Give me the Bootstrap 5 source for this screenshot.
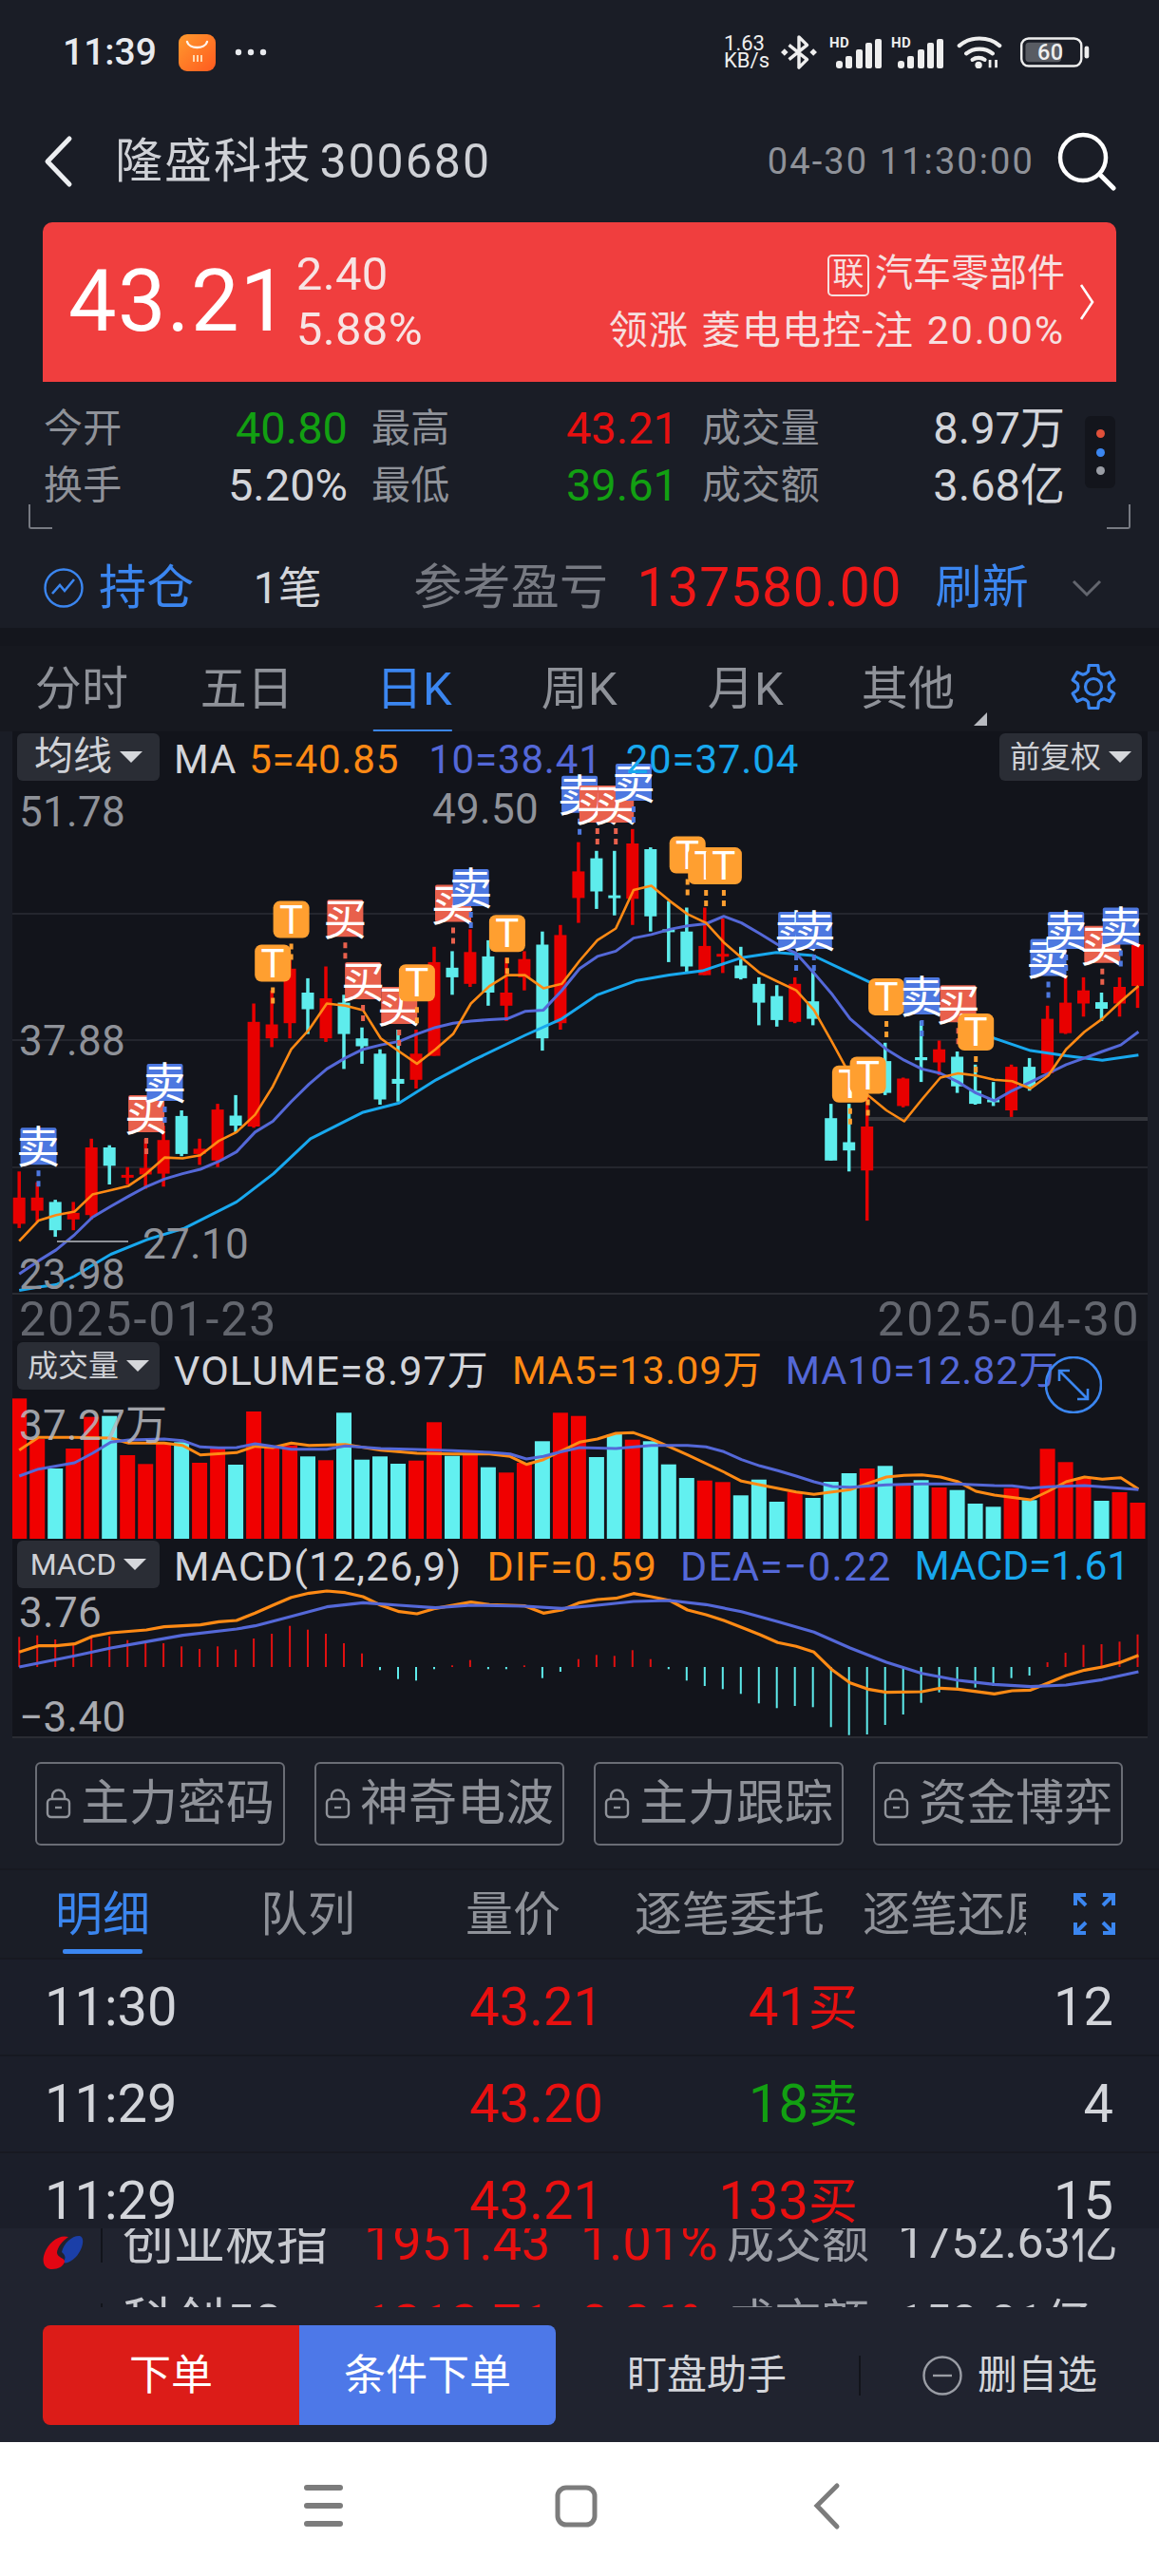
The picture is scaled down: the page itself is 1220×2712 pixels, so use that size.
<!DOCTYPE html>
<html lang="zh-CN">
<head>
<meta charset="utf-8">
<title>隆盛科技 300680</title>
<link href="https://cdn.jsdelivr.net/npm/bootstrap@5.3.0/dist/css/bootstrap.min.css" rel="stylesheet">
<style>
html,body{margin:0;background:#1a1d26}
body{width:1220px;height:2712px;overflow:hidden;font-family:Roboto,"Noto Sans CJK SC",sans-serif;color:#d3d5da;letter-spacing:.02em}
.c-red{color:#e81010}.c-green{color:#12a012}.c-blue{color:#3b86f0}.c-gray{color:#8f9299}.c-org{color:#ff8a14}.c-idx{color:#5468d8}.c-sky{color:#18a8ee}
.st-bar{height:110px;padding:0 72px 0 66px}
.st-time{font-size:39px;font-weight:500;color:#e8eaee;letter-spacing:0;line-height:1}
.st-app{width:39px;height:39px;border-radius:9px;background:linear-gradient(135deg,#ff9a2e,#ff5a1f);margin-left:23px;margin-right:20px}
.st-speed{font-size:22px;line-height:18px;color:#eee;letter-spacing:0;text-align:left;margin-right:12px}
.st-sig{margin-left:13px}.st-sig2{margin-left:10px}.st-wifi{margin-left:14px}.st-bat{margin-left:18px}
.hdr{height:124px;padding:0 45px 4px 45px}
.hdr-title{font-size:50px;margin-left:44px;letter-spacing:.04em;word-spacing:-7px;color:#cfd1d6}
.hdr-time{font-size:38px;color:#8f9299;letter-spacing:.055em;margin-right:24px}
.quote{height:168px;margin:0 45px;background:#f03e3e;border-radius:10px 10px 0 0;color:#fff;padding:0 22px 0 27px}
.q-big{font-size:90px;letter-spacing:.015em;line-height:1}
.q-small{font-size:49px;line-height:58px;margin-left:7px;color:#f7e4e4}
.q-right{font-size:41px;line-height:60px;text-align:right;color:#f6e0e0;margin-right:14px;word-spacing:2px;letter-spacing:.03em}
.q-line1{font-size:40px;letter-spacing:0}
.q-pct{letter-spacing:.05em}
.q-tag{display:inline-block;width:44px;height:44px;border:2px solid #f6e0e0;border-radius:5px;font-size:33px;line-height:38px;text-align:center;letter-spacing:0;margin-right:6px;vertical-align:1px}
.stats{padding:19px 0 0 46px}
.stat-grid{display:grid;grid-template-columns:320px 323px 382px;column-gap:25px;grid-auto-rows:60px;font-size:41px;line-height:60px}
.stat-cell{display:flex;justify-content:space-between;white-space:nowrap}
.stat-lab{color:#8f9299}.stat-val{font-size:47px;letter-spacing:0}
.stat-dots{width:32px;height:76px;background:#13151c;border-radius:6px;margin-left:21px;margin-top:17px;padding:14px 0;display:flex;flex-direction:column;align-items:center;justify-content:space-between}
.dot-i{width:9px;height:9px;border-radius:50%}
.corners{padding:0 30px;margin-top:-10px;height:26px}
.corner{width:25px;height:26px;border-bottom:2px solid #777a82;border-left:2px solid #777a82;border-radius:0 0 0 3px}
.corner.r{border-left:0;border-right:2px solid #777a82;border-radius:0 0 3px 0}
.hold{height:104px;padding:20px 0 0 46px;white-space:nowrap}
.hold-a{font-size:50px;color:#3b86f0;margin-left:16px}
.hold-b{font-size:46px;margin-left:62px;color:#d3d5da}
.hold-c{font-size:51px;color:#777a82;margin-left:96px}
.hold-d{font-size:57px;color:#f01818;margin-left:30px;letter-spacing:.015em}
.hold-e{font-size:49px;color:#3b86f0;margin-left:35px}
.hold-f{margin-left:45px}
.strip{height:19px;background:#14161d}
.ktabs{height:90px;background:#16181f;position:relative}
.ktab{position:absolute;top:18px;font-size:49px;line-height:56px;color:#8f9299;transform:translateX(-50%);white-space:nowrap}
.ktab.on{color:#3b86f0}
.ktab.on::after{content:"";position:absolute;left:-3px;right:0;top:70px;height:4px;background:#3b86f0}
.cpanel{margin:0 12px 0 13px;position:relative;background:#12141b}
.cpanel svg{display:block}
.chip{position:absolute;top:2px;left:5px;height:50px;background:#2a2d35;border-radius:6px;display:flex;align-items:center;justify-content:center;color:#cfd1d6;font-size:32px;width:150px;gap:8px;letter-spacing:0}
.chip::after{content:"";border:12px solid transparent;border-top:12px solid #d5d7db;border-bottom:0}
.chip.big{font-size:41px}
.chip.rt{left:auto;right:6px}
.legend{position:absolute;top:0;left:170px;display:flex;font-size:43px;line-height:56px;white-space:nowrap;letter-spacing:.025em}
.leg-ma{top:2px;font-size:42px;letter-spacing:.02em}
.leg-sm{font-size:41.500px;letter-spacing:.02em}
.leg-tight{font-size:42.500px;letter-spacing:0}
.locks{padding:25px 37px 0;gap:31px}
.lockb{width:263px;height:88px;border:2px solid #6a6d75;border-radius:6px;font-size:51px;color:#8f9299;padding:0;display:flex;align-items:center;justify-content:center;gap:10px;letter-spacing:0}
.sep-line{height:26px;border-bottom:2px solid #171921}
.dtabs{height:92px;position:relative}
.dt-wrap{width:1080px;overflow:hidden;display:flex;height:92px}
.dtab{flex:0 0 auto;font-size:50px;line-height:94px;text-align:center;color:#8f9299;letter-spacing:0;white-space:nowrap}
.dtab.on{color:#3b86f0;position:relative}
.dtab.on::after{content:"";position:absolute;left:66px;width:84px;bottom:4px;height:5px;background:#3b86f0;border-radius:2px}
.w216{width:216px}.w240{width:240px}.w-last{margin-left:20px;width:200px;text-align:left}
.d-exp{position:absolute;left:1130px;top:24px}
.trow{display:grid;grid-template-columns:253px 335px 268px 269px;padding-left:47px;height:102px;line-height:100px;font-size:56px;background:#1b1e29;border-top:2px solid #171921;letter-spacing:0;overflow:hidden}
.trow.last{height:81px}
.trow .e{text-align:right}
.trow .cj{font-size:52px}
.idx{height:83px;background:#20232f;overflow:hidden;padding:0 0 0 45px}
.idx-line{display:flex;align-items:center;height:85px;font-size:54px;white-space:nowrap;letter-spacing:0;color:#c8cad0;position:relative}
.idx-line>*{flex:none}
.idx-line.one{margin-top:-28px}
.idx-logo{position:relative;top:10px}
.idx-sep{width:2px;height:42px;background:#12141b;margin:0 21px 0 18px}
.idx-n{width:254px}
.idx-p{width:228px}
.idx-q{width:154px}
.idx-r{width:180px;font-size:50px;color:#9a9da5}
.idx-v{font-size:50px}
.bot{height:142px;background:#20232f;padding:19px 0 18px 45px}
.btn-red,.btn-blu{width:270px;height:105px;color:#fff;font-size:44px;border:0;border-radius:8px 0 0 8px;background:#dc1c18;letter-spacing:0}
.btn-blu{background:#4d78e8;border-radius:0 8px 8px 0}
.bot-a{font-size:42px;color:#d3d5da;margin-left:75px;letter-spacing:0}
.bot-s{width:2px;height:42px;background:#12141b;margin:0 65px 0 76px}
.bot-b{font-size:42px;color:#d3d5da;margin-left:16px;letter-spacing:0}
.nav-w{height:142px;background:#fff;position:relative}
.nav-w svg{display:block}
.exp-ic{position:absolute;left:1087px;top:16px}
</style>
</head>
<body>

<div class="st-bar d-flex align-items-center">
  <span class="st-time">11:39</span>
  <div class="st-app">
    <svg width="39" height="39" viewBox="0 0 39 39"><path d="M9 8c2 8 19 8 21 0" fill="none" stroke="#fff" stroke-width="2.4" stroke-linecap="round" opacity=".9"/><rect x="15" y="22" width="2" height="7" fill="#ffd9b0"/><rect x="19" y="22" width="2" height="7" fill="#ffd9b0"/><rect x="23" y="22" width="2" height="7" fill="#ffd9b0"/></svg>
  </div>
  <svg width="34" height="10" viewBox="0 0 34 10"><circle cx="4" cy="5" r="3.2" fill="#e8eaee"/><circle cx="17" cy="5" r="3.2" fill="#e8eaee"/><circle cx="30" cy="5" r="3.2" fill="#e8eaee"/></svg>
  <div class="ms-auto d-flex align-items-center">
    <div class="st-speed">1.63<br>KB/s</div>
    <svg width="38" height="42" viewBox="0 0 40 44"><path d="M9 14l20 16-9 9V5l9 9-20 16" fill="none" stroke="#eee" stroke-width="3.6" stroke-linejoin="round"/><path d="M4 18l4 4-4 4-4-4zM36 18l4 4-4 4-4-4z" fill="#eee"/></svg>
    <svg class="st-sig" width="55" height="36" viewBox="0 0 55 36"><text x="0" y="13" font-size="15" font-weight="700" fill="#eee" font-family="Roboto">HD</text><rect x="7" y="27" width="7" height="8" rx="3" fill="#eee"/><rect x="17" y="22" width="7" height="13" rx="2" fill="#eee"/><rect x="28" y="15" width="7" height="20" rx="2" fill="#eee"/><rect x="38" y="8" width="7" height="27" rx="2" fill="#eee"/><rect x="48" y="4" width="7" height="31" rx="2" fill="#eee"/></svg>
    <svg class="st-sig2" width="55" height="36" viewBox="0 0 55 36"><text x="0" y="13" font-size="15" font-weight="700" fill="#eee" font-family="Roboto">HD</text><rect x="7" y="27" width="7" height="8" rx="3" fill="#eee"/><rect x="17" y="22" width="7" height="13" rx="2" fill="#eee"/><rect x="28" y="15" width="7" height="20" rx="2" fill="#eee"/><rect x="38" y="8" width="7" height="27" rx="2" fill="#eee"/><rect x="48" y="4" width="7" height="31" rx="2" fill="#eee"/></svg>
    <svg class="st-wifi" width="48" height="37" viewBox="0 0 52 38"><g fill="none" stroke="#eee" stroke-width="4.5" stroke-linecap="round"><path d="M3 11C15 0 37 0 49 11"/><path d="M11 20c8-7 22-7 30 0"/><path d="M18 27c4-3 10-3 14 0"/></g><circle cx="25" cy="33" r="4" fill="#eee"/><path d="M38 36v-9M45 36v-9" stroke="#eee" stroke-width="3"/></svg>
    <svg class="st-bat" width="75" height="32" viewBox="0 0 78 34"><rect x="1.5" y="1.500" width="67" height="31" rx="8" fill="none" stroke="#eee" stroke-width="2.6"/><rect x="6" y="6" width="40" height="22" rx="4" fill="#595c63"/><rect x="72" y="10" width="5" height="14" rx="2.5" fill="#eee"/><text x="34" y="26" font-size="25" font-weight="500" fill="#eee" text-anchor="middle" font-family="Roboto">60</text></svg>
  </div>
</div>

<div class="hdr d-flex align-items-center">
  <svg width="32" height="56" viewBox="0 0 32 56"><path d="M28 4L5 28l23 24" fill="none" stroke="#eceef1" stroke-width="5" stroke-linecap="round" stroke-linejoin="round"/></svg>
  <span class="hdr-title">隆盛科技 300680</span>
  <span class="hdr-time ms-auto">04-30 11:30:00</span>
  <svg width="62" height="62" viewBox="0 0 62 62"><circle cx="27" cy="27" r="24" fill="none" stroke="#fff" stroke-width="4.5"/><path d="M45 45l14 14" stroke="#fff" stroke-width="5" stroke-linecap="round"/></svg>
</div>

<div class="quote d-flex align-items-center">
  <div class="q-big">43.21</div>
  <div class="q-small"><div>2.40</div><div>5.88%</div></div>
  <div class="ms-auto q-right">
    <div class="q-line1"><span class="q-tag">联</span>汽车零部件</div>
    <div>领涨 菱电电控-注 <span class="q-pct">20.00%</span></div>
  </div>
  <svg width="18" height="42" viewBox="0 0 18 42"><path d="M3 3l12 18L3 39" fill="none" stroke="#fff" stroke-width="2.6"/></svg>
</div>

<div class="stats d-flex">
  <div class="stat-grid">
    <div class="stat-cell"><span class="stat-lab">今开</span><span class="stat-val c-green">40.80</span></div>
    <div class="stat-cell"><span class="stat-lab">最高</span><span class="stat-val c-red">43.21</span></div>
    <div class="stat-cell"><span class="stat-lab">成交量</span><span class="stat-val">8.97万</span></div>
    <div class="stat-cell"><span class="stat-lab">换手</span><span class="stat-val">5.20%</span></div>
    <div class="stat-cell"><span class="stat-lab">最低</span><span class="stat-val c-green">39.61</span></div>
    <div class="stat-cell"><span class="stat-lab">成交额</span><span class="stat-val">3.68亿</span></div>
  </div>
  <div class="stat-dots"><i class="dot-i" style="background:#e0503a"></i><i class="dot-i" style="background:#3b86f0"></i><i class="dot-i" style="background:#9a9da5"></i></div>
</div>
<div class="corners d-flex justify-content-between"><div class="corner"></div><div class="corner r"></div></div>

<div class="hold d-flex align-items-center">
  <svg width="42" height="42" viewBox="0 0 42 42"><circle cx="21" cy="21" r="19.5" fill="none" stroke="#3b86f0" stroke-width="2.4"/><path d="M9 27l8-9 5 6 10-12" fill="none" stroke="#3b86f0" stroke-width="2.6"/></svg>
  <span class="hold-a">持仓</span><span class="hold-b">1笔</span><span class="hold-c">参考盈亏</span><span class="hold-d">137580.00</span><span class="hold-e">刷新</span>
  <svg class="hold-f" width="32" height="20" viewBox="0 0 32 20"><path d="M2 3l14 14L30 3" fill="none" stroke="#63666e" stroke-width="3"/></svg>
</div>
<div class="strip"></div>

<div class="ktabs">
  <span class="ktab" style="left:86px">分时</span>
  <span class="ktab" style="left:260px">五日</span>
  <span class="ktab on" style="left:436px">日K</span>
  <span class="ktab" style="left:610px">周K</span>
  <span class="ktab" style="left:785px">月K</span>
  <span class="ktab" style="left:956px">其他</span>
  <svg class="position-absolute" style="left:1025px;top:70px" width="14" height="14" viewBox="0 0 14 14"><path d="M14 0v14H0z" fill="#b8bac0"/></svg>
  <svg class="position-absolute" style="left:1126px;top:18px" width="50" height="50" viewBox="-25 -25 50 50"><path id="gearp" fill="none" stroke="#3b86f0" stroke-width="3.2" stroke-linejoin="round"/><circle r="8.5" fill="none" stroke="#3b86f0" stroke-width="3.2"/></svg>
</div>

<div class="cpanel" id="p1">
  <svg id="s1" width="1195" height="642" viewBox="13 770 1195 642"></svg>
  <div class="chip big">均线</div>
  <div class="chip rt">前复权</div>
  <div class="legend leg-ma"><span>MA</span><span class="c-org" style="margin-left:13px">5=40.85</span><span class="c-idx" style="margin-left:31px">10=38.41</span><span class="c-sky" style="margin-left:25px">20=37.04</span></div>
</div>
<div class="cpanel" id="p2">
  <svg id="s2" width="1195" height="208" viewBox="13 1412 1195 208"></svg>
  <div class="chip" style="top:1px">成交量</div>
  <div class="legend" style="top:3px"><span>VOLUME=8.97万</span><span class="c-org leg-sm" style="margin-left:24px">MA5=13.09万</span><span class="c-idx leg-sm" style="margin-left:24px">MA10=12.82万</span></div>
  <svg class="exp-ic" width="60" height="60" viewBox="0 0 60 60"><circle cx="30" cy="30" r="29" fill="none" stroke="#3b86f0" stroke-width="2.6"/><path d="M15 15l30 30M15 26V15h11M45 34v11H34" fill="none" stroke="#3b86f0" stroke-width="2.6"/></svg>
</div>
<div class="cpanel" id="p3">
  <svg id="s3" width="1195" height="210" viewBox="13 1620 1195 210"></svg>
  <div class="chip" style="top:2px">MACD</div>
  <div class="legend" style="top:1px"><span>MACD(12,26,9)</span><span class="c-org" style="margin-left:26px">DIF=0.59</span><span class="c-idx" style="margin-left:24px">DEA=−0.22</span><span class="c-sky leg-tight" style="margin-left:24px">MACD=1.61</span></div>
</div>

<div class="locks d-flex" id="locks"></div>
<div class="sep-line"></div>

<div class="dtabs">
  <div class="dt-wrap">
    <span class="dtab w216 on">明细</span><span class="dtab w216">队列</span><span class="dtab w216">量价</span><span class="dtab w240">逐笔委托</span><span class="dtab w-last">逐笔还原</span>
  </div>
  <svg class="d-exp" width="44" height="44" viewBox="0 0 44 44"><g fill="none" stroke="#3b86f0" stroke-width="4"><path d="M2 13V2h11M2 2l11 11M42 13V2H31M42 2L31 13M2 31v11h11M2 42l11-11M42 31v11H31M42 42L31 31"/></g></svg>
</div>
<div class="trow"><span>11:30</span><span class="e c-red">43.21</span><span class="e c-red">41<span class="cj">买</span></span><span class="e">12</span></div>
<div class="trow"><span>11:29</span><span class="e c-red">43.20</span><span class="e c-green">18<span class="cj">卖</span></span><span class="e">4</span></div>
<div class="trow last"><span>11:29</span><span class="e c-red">43.21</span><span class="e c-red">133<span class="cj">买</span></span><span class="e">15</span></div>

<div class="idx">
  <div class="idx-line one">
    <svg class="idx-logo" width="43" height="36" viewBox="0 0 43 36"><path d="M20 18C22 8 32 0 39 1c6 2 3 14-4 22-6 6-12 8-14 5 3-2 4-6-1-10z" fill="#1b3fa8"/><path d="M27 2C17-1 6 8 2 19c-4 11 1 17 8 17 6 0 12-3 13-8 0-4-7-4-8-9 0-6 6-13 12-17z" fill="#e30613"/></svg>
    <span class="idx-sep"></span>
    <span class="idx-n">创业板指</span><span class="idx-p c-red">1951.43</span><span class="idx-q c-red">1.01%</span><span class="idx-r">成交额</span><span class="idx-v">1752.63亿</span>
  </div>
  <div class="idx-line">
    <svg width="43" height="36" viewBox="0 0 43 36"><circle cx="21" cy="18" r="17" fill="#e30613"/></svg>
    <span class="idx-sep"></span>
    <span class="idx-n">科创50</span><span class="idx-p c-red">1212.71</span><span class="idx-q c-red">0.26%</span><span class="idx-r">成交额</span><span class="idx-v">152.21亿</span>
  </div>
</div>

<div class="bot d-flex align-items-center">
  <button class="btn btn-red" type="button">下单</button><button class="btn btn-blu" type="button">条件下单</button>
  <span class="bot-a">盯盘助手</span><span class="bot-s"></span>
  <svg width="42" height="42" viewBox="0 0 42 42"><circle cx="21" cy="21" r="19.5" fill="none" stroke="#9a9da5" stroke-width="2.4"/><path d="M11 21h20" stroke="#9a9da5" stroke-width="2.4"/></svg>
  <span class="bot-b">删自选</span>
</div>

<div class="nav-w">
  <svg width="1220" height="142" viewBox="0 0 1220 142"><g fill="none" stroke="#7c7c7c" stroke-width="6" stroke-linecap="round"><path d="M323 48h35M323 67h35M323 86h35"/><rect x="587" y="48" width="39" height="39" rx="9" stroke-width="5"/><path d="M881 46L860 67l21 22" stroke-width="5"/></g></svg>
</div>

<script>
var X=function(z){return +(z/1.285).toFixed(1)};
var Y1=function(z){return +(680+z/2.178).toFixed(1)};
var Y2=function(z){return +(1400+z/3).toFixed(1)};
var xi=function(i){return X(26+24.4*i)};
var RED='#e80000',CY='#5eecec',OR='#ff8a14',BL='#5468d8',SK='#18a8ee';
var candles=[[1,1205,1265,1325,1335],[1,1230,1265,1295,1320],[0,1270,1275,1340,1355],[1,1275,1300,1315,1340],[1,1130,1150,1305,1315],[0,1145,1150,1192,1235],[1,1195,1213,1216,1235],[1,1130,1197,1212,1245],[1,1100,1133,1210,1240],[0,1065,1078,1165,1170],[1,1130,1153,1165,1190],[1,1050,1063,1180,1195],[0,1030,1077,1100,1115],[1,820,862,1102,1105],[1,790,868,900,920],[1,720,740,865,900],[0,762,795,833,890],[1,735,808,900,908],[0,800,818,890,970],[0,875,900,918,958],[0,925,935,1040,1052],[0,880,993,1004,1045],[1,880,935,995,1015],[1,690,725,940,940],[0,700,738,760,800],[1,650,702,775,782],[0,675,712,795,825],[1,715,795,825,860],[1,700,718,760,790],[0,655,685,900,928],[1,640,663,865,880],[1,450,517,578,635],[0,470,487,563,603],[0,470,572,577,618],[1,420,453,580,640],[0,462,466,620,655],[0,585,650,653,725],[0,600,655,735,748],[1,600,688,755,755],[1,625,706,710,750],[0,690,733,762,765],[0,760,775,818,870],[0,778,803,858,873],[1,760,775,862,865],[0,740,815,855,870],[0,1050,1083,1180,1180],[0,1050,1138,1157,1205],[1,1000,1102,1203,1318],[0,910,952,1025,1030],[1,990,992,1055,1058],[0,860,943,950,1000],[1,905,925,955,985],[0,930,942,1010,1025],[0,960,1020,1050,1052],[0,1000,1040,1045,1055],[1,960,965,1065,1080],[0,945,965,1010,1020],[1,825,855,980,985],[1,760,818,888,890],[1,760,790,820,850],[0,795,817,832,860],[1,760,782,820,850],[1,680,685,780,830]];
var ma5=[26,1365,52,1318,76,1305,101,1297,125,1258,150,1248,174,1238,198,1210,223,1173,247,1175,271,1168,296,1135,320,1115,345,1075,369,1010,394,925,418,880,442,820,467,825,491,835,515,900,540,930,564,958,589,925,613,890,637,820,662,780,686,755,710,755,735,785,760,775,784,722,808,675,833,648,857,560,881,550,906,585,930,615,955,635,979,680,1003,715,1028,750,1052,770,1077,790,1101,835,1126,910,1150,985,1174,1030,1199,1065,1223,1090,1247,1040,1272,990,1296,980,1320,985,1345,995,1369,998,1394,1015,1418,985,1442,925,1467,885,1491,855,1516,815,1540,780];
var ma10=[26,1440,52,1410,76,1385,101,1350,125,1310,150,1285,174,1262,198,1240,223,1222,247,1210,271,1200,296,1182,320,1160,345,1115,369,1090,394,1045,418,1005,442,970,467,945,491,925,515,915,540,907,564,890,589,875,613,865,637,860,662,857,686,855,710,838,735,835,760,790,784,740,808,712,833,700,857,670,881,662,906,650,930,642,955,637,979,620,1003,635,1028,660,1052,685,1077,705,1101,750,1126,800,1150,855,1174,890,1199,925,1223,950,1247,970,1272,980,1296,1000,1320,1025,1345,1043,1369,1020,1394,1000,1418,980,1442,960,1467,945,1491,930,1516,915,1540,885];
var ma20=[26,1478,52,1470,76,1465,101,1445,125,1420,150,1395,198,1362,250,1335,320,1275,370,1210,420,1130,490,1070,540,1048,590,995,640,950,710,893,760,855,808,800,860,768,905,755,950,745,1003,715,1050,703,1100,710,1150,750,1200,790,1270,840,1345,900,1394,928,1442,940,1491,950,1540,938];
var tiles=[['卖',52,1105],['买',198,1030],['卖',223,958],['T',369,685],['T',394,585],['买',467,582],['买',491,725],['买',540,782],['T',564,730],['买',613,548],['卖',637,512],['T',686,617],['卖',784,298],['买',808,320],['买',833,320],['卖',857,270],['T',930,437],['T',955,462],['T',979,462],['卖',1077,610],['卖',1101,610],['T',1150,962],['T',1174,942],['T',1199,762],['卖',1247,760],['买',1296,778],['T',1320,843],['卖',1418,672],['卖',1442,610],['买',1491,642],['卖',1516,600]];
var line=function(a,fx,fy,c,w){var p=[];for(var i=0;i<a.length;i+=2)p.push(fx(a[i])+','+fy(a[i+1]));return '<polyline points="'+p.join(' ')+'" fill="none" stroke="'+c+'" stroke-width="'+w+'" stroke-linejoin="round"/>'};
var label=function(t,x,y,fs,c,anchor,op,ls){return '<text x="'+x+'" y="'+y+'" font-size="'+fs+'" fill="'+c+'"'+(anchor?' text-anchor="'+anchor+'"':'')+(op?' opacity="'+op+'"':'')+(ls?' letter-spacing="'+ls+'"':'')+' font-family="Roboto,Noto Sans CJK SC,sans-serif">'+t+'</text>'};
var h='';
[962,1095,1229].forEach(function(y){h+='<path d="M13 '+y+'H1208" stroke="#24262e" stroke-width="2"/>'});
h+='<path d="M914 1178H1208" stroke="#33353b" stroke-width="4"/>';
h+='<path d="M13 1362H1208" stroke="#2a2c33" stroke-width="2"/>';
h+='<rect x="13" y="1363" width="1195" height="49" fill="#14161d"/>';
candles.forEach(function(c,i){var col=c[0]?RED:CY,x=xi(i);
 h+='<rect x="'+(x-1.75)+'" y="'+Y1(c[1])+'" width="3.5" height="'+(Y1(c[4])-Y1(c[1])).toFixed(1)+'" fill="'+col+'"/>';
 h+='<rect x="'+(x-6.5)+'" y="'+Y1(c[2])+'" width="13" height="'+Math.max(3,Y1(c[3])-Y1(c[2])).toFixed(1)+'" fill="'+col+'"/>';});
h+=line(ma20,X,Y1,SK,3)+line(ma10,X,Y1,BL,3)+line(ma5,X,Y1,OR,2.6);
tiles.forEach(function(t){var x=X(t[1]),y=Y1(t[2]),isT=t[0]=='T',col=isT?'#ff9f30':t[0]=='买'?'#e8604c':'#4d78e0';
 h+='<path d="M'+x+' '+(y+45)+'v20" stroke="'+col+'" stroke-width="4" stroke-dasharray="6 5"/>';
 h+='<rect x="'+(x-19)+'" y="'+y+'" width="38" height="39" rx="'+(isT?7:2)+'" fill="'+col+'"/>';
 h+='<text x="'+x+'" y="'+(y+(isT?34:37))+'" font-size="'+(isT?42:46)+'" fill="#fff" text-anchor="middle" font-family="Roboto,Noto Sans CJK SC,sans-serif">'+t[0]+'</text>';});
h+=label('51.78',20,870,44,'#8f9299')+label('49.50',455,867,44,'#8f9299')+label('37.88',20,1111,44,'#8f9299')+label('27.10',150,1325,44,'#8f9299')+label('23.98',20,1357,44,'#8f9299');
h+='<path d="M60 1307h75" stroke="#8f9299" stroke-width="2"/>';
h+=label('2025-01-23',20,1406,50,'#63666e',null,null,2)+label('2025-04-30',1201,1406,50,'#63666e','end',null,2.5);
document.getElementById('s1').innerHTML=h;

var vols=[[1,217],[1,345],[0,438],[1,375],[1,275],[0,272],[1,396],[1,424],[1,358],[0,355],[1,420],[1,375],[0,426],[1,258],[1,370],[1,365],[0,400],[1,412],[0,262],[0,410],[0,400],[0,423],[1,413],[1,292],[0,398],[1,390],[0,434],[1,451],[1,420],[0,352],[1,262],[1,272],[0,402],[0,330],[1,347],[0,352],[0,425],[0,468],[1,476],[1,481],[0,523],[0,473],[0,543],[1,512],[0,531],[0,480],[0,453],[1,438],[0,430],[1,490],[0,475],[1,498],[0,506],[0,549],[0,559],[1,500],[0,538],[1,376],[1,418],[1,470],[0,540],[1,513],[1,546]];
var vo=[26,380,52,340,100,340,150,342,174,358,222,358,247,365,271,395,320,388,345,368,369,372,394,358,418,365,467,362,515,380,564,390,613,392,662,392,690,400,712,425,735,410,784,355,808,345,833,327,857,325,881,345,906,370,930,395,980,450,1003,478,1028,490,1077,512,1101,520,1150,505,1174,485,1199,465,1223,460,1247,458,1272,465,1296,480,1320,510,1345,522,1394,537,1418,510,1442,480,1467,465,1491,472,1516,467,1540,503];
var vb=[26,462,52,440,101,420,125,390,150,355,174,348,222,345,247,350,271,370,296,373,320,372,345,360,369,368,394,377,442,377,467,367,515,375,564,378,613,382,662,387,690,392,712,408,735,400,760,385,784,372,833,375,881,365,930,365,955,370,979,385,1003,410,1028,430,1052,445,1077,462,1101,480,1126,495,1150,497,1199,490,1247,487,1296,487,1345,492,1369,493,1394,500,1418,496,1467,492,1516,500,1540,505];
h='';
vols.forEach(function(v,i){var x=xi(i),y=Y2(v[1]);h+='<rect x="'+(x-8)+'" y="'+y+'" width="16" height="'+(1620-y).toFixed(1)+'" fill="'+(v[0]?'#f00000':'#62f0f0')+'"/>';});
h+=line(vo,X,Y2,OR,3)+line(vb,X,Y2,BL,3);
h+=label('37.27万',20,1516,44,'#b8bac0',null,'.85');
document.getElementById('s2').innerHTML=h;

var mb=[970,965,978,990,970,968,980,985,990,1000,1008,1000,1010,975,960,935,947,960,990,1022,1075,1103,1108,1072,1060,1043,1072,1072,1060,1100,1080,1040,1027,1030,1012,1040,1072,1108,1125,1135,1150,1180,1195,1188,1192,1255,1280,1278,1248,1215,1178,1145,1135,1130,1125,1100,1092,1050,1020,995,993,985,962];
var dif=[26,1018,52,998,76,998,101,992,125,968,150,957,198,948,222,938,271,932,296,922,320,918,345,895,369,870,394,845,418,832,442,825,467,830,491,843,515,870,540,890,564,897,589,880,637,860,662,868,710,872,735,895,760,885,784,862,808,852,833,848,857,833,881,843,906,855,930,885,955,900,979,918,1003,940,1028,963,1052,988,1077,1000,1101,1018,1126,1075,1150,1115,1174,1135,1199,1145,1247,1143,1272,1132,1296,1135,1345,1150,1369,1140,1394,1138,1418,1115,1442,1092,1467,1075,1491,1065,1516,1050,1540,1028];
var dea=[26,1065,101,1030,150,1005,198,985,247,965,320,945,345,935,394,905,442,875,491,862,540,870,589,878,637,870,710,873,760,880,808,870,857,858,906,855,955,868,1003,890,1052,922,1101,955,1150,1005,1199,1050,1247,1085,1296,1107,1345,1120,1394,1127,1442,1122,1491,1105,1540,1080];
h='<path d="M13 1829H1208" stroke="#2a2c33" stroke-width="2"/>';
mb.forEach(function(v,i){var x=xi(i),y=Y2(v),z=Y2(1065),up=v<1065;h+='<rect x="'+(x-1)+'" y="'+Math.min(y,z)+'" width="2" height="'+Math.abs(z-y).toFixed(1)+'" fill="'+(up?'#e01010':'#5eecec')+'"/>';});
h+=line(dif,X,Y2,OR,3.2)+line(dea,X,Y2,BL,3.2);
h+=label('3.76',20,1713,44,'#a8aab0')+label('−3.40',20,1823,44,'#a8aab0');
document.getElementById('s3').innerHTML=h;

var ls='';['主力密码','神奇电波','主力跟踪','资金博弈'].forEach(function(t){ls+='<button type="button" class="btn lockb"><svg width="27" height="32" viewBox="0 0 27 32"><rect x="2" y="11" width="23" height="19" rx="4" fill="none" stroke="#8f9299" stroke-width="2.4"/><path d="M7 11V8a6.500 6.500 0 0 1 13 0v3" fill="none" stroke="#8f9299" stroke-width="2.4"/><path d="M10 20h7" stroke="#8f9299" stroke-width="2.4"/></svg>'+t+'</button>'});
document.getElementById('locks').innerHTML=ls;

var g='',R=23,r=17,q=Math.PI/180;
for(var k=0;k<6;k++){var a=-90+60*k,pt=function(an,rad){return (rad*Math.cos(an*q)).toFixed(2)+' '+(rad*Math.sin(an*q)).toFixed(2)};
 g+=(k?'L':'M')+pt(a-19,r)+'L'+pt(a-12,R)+'L'+pt(a+12,R)+'L'+pt(a+19,r)+'L'+pt(a+30,r-1);}
document.getElementById('gearp').setAttribute('d',g+'Z');
</script>
<script src="https://cdn.jsdelivr.net/npm/bootstrap@5.3.0/dist/js/bootstrap.bundle.min.js"></script>
</body>
</html>
